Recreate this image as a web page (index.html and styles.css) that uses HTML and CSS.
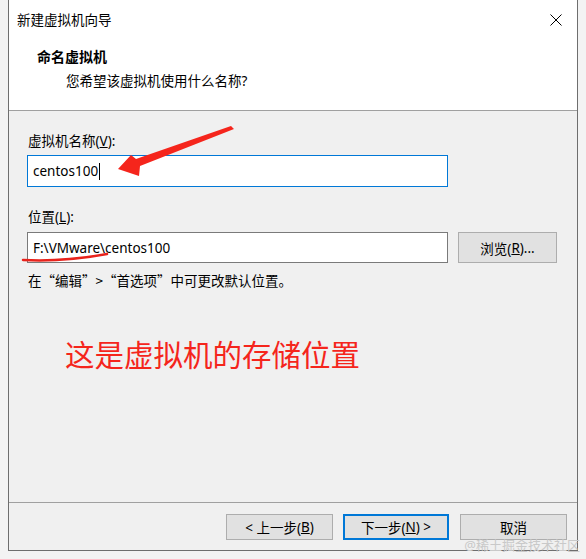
FILE: index.html
```html
<!DOCTYPE html>
<html lang="zh-CN">
<head>
<meta charset="utf-8">
<title>新建虚拟机向导</title>
<link rel="stylesheet" href="styles.css">
</head>
<body>
<div class="window">
  <div class="header">
    <div class="titlebar">
      <span class="title">新建虚拟机向导</span>
      <svg class="close" width="12" height="12" viewBox="0 0 12 12"><path d="M0.5 0.5L11.5 11.5M11.5 0.5L0.5 11.5" stroke="#000" stroke-width="1" fill="none"/></svg>
    </div>
    <div class="heading">命名虚拟机</div>
    <div class="subheading">您希望该虚拟机使用什么名称?</div>
  </div>
  <div class="body">
    <div class="label">虚拟机名称(<u>V</u>):</div>
    <div class="input focused"><span class="value">centos100</span><span class="caret"></span></div>
    <div class="label label-loc">位置(<u>L</u>):</div>
    <div class="row">
      <div class="input loc"><span class="value">F:\VMware\centos100</span></div>
      <div class="btn browse">浏览(<u>R</u>)...</div>
    </div>
    <div class="hint">在“编辑”&gt;“首选项”中可更改默认位置。</div>
    <div class="note">这是虚拟机的存储位置</div>
  </div>
  <div class="footer">
    <div class="btn">&lt; 上一步(<u>B</u>)</div>
    <div class="btn primary">下一步(<u>N</u>) &gt;</div>
    <div class="btn">取消</div>
  </div>
</div>
<svg class="annot" width="586" height="559" viewBox="0 0 586 559">
  <polygon points="118,169 131,155 136,159 231,126 234,129 140,166 139,176" fill="#f5251c"/>
  <path d="M23 260 Q64 262 107 254" stroke="#e8231c" stroke-width="2.5" fill="none" stroke-linecap="round"/>
</svg>
<div class="watermark">@稀土掘金技术社区</div>
</body>
</html>
```

FILE: styles.css
```css
html, body {
  margin: 0;
  padding: 0;
}
body {
  width: 586px;
  height: 559px;
  background: #f3f3f3;
  font-family: "Noto Sans", "Noto Sans CJK SC", sans-serif;
  font-size: 13.5px;
  color: #000;
  position: relative;
  overflow: hidden;
}
.window {
  margin-left: 8px;
  width: 568px;
  height: 550px;
  border: 1px solid #6e6e6e;
  border-top: none;
  background: #f0f0f0;
  display: flex;
  flex-direction: column;
}
.header {
  background: #fff;
  border-bottom: 1px solid #a0a0a0;
  box-sizing: border-box;
  height: 111px;
  flex: none;
}
.titlebar {
  height: 40px;
  display: flex;
  align-items: center;
  justify-content: space-between;
  padding-left: 8px;
  padding-right: 15px;
}
.title {
  line-height: 16px;
}
.close {
  display: block;
}
.heading {
  font-weight: bold;
  font-size: 14px;
  line-height: 18px;
  margin-top: 8px;
  padding-left: 28px;
}
.subheading {
  line-height: 18px;
  margin-top: 6px;
  padding-left: 57px;
}
.body {
  flex: 1;
  padding: 22px 0 0 18px;
  display: flex;
  flex-direction: column;
}
.label {
  line-height: 16px;
  padding-left: 1px;
}
.label-loc {
  margin-top: 22px;
}
.input {
  width: 421px;
  box-sizing: border-box;
  height: 32px;
  margin-top: 6px;
  border: 1px solid #7a7a7a;
  background: #fff;
  display: flex;
  align-items: center;
  padding-left: 5px;
}
.input.focused {
  border-color: #0078d7;
}
.caret {
  display: inline-block;
  width: 1px;
  height: 17px;
  background: #000;
  margin-left: 1px;
}
.row {
  display: flex;
  align-items: flex-start;
  gap: 10px;
  margin-top: 7px;
}
.input.loc {
  margin-top: 0;
  height: 31px;
}
.btn {
  box-sizing: border-box;
  height: 26px;
  width: 107px;
  border: 1px solid #adadad;
  background: #e1e1e1;
  display: flex;
  align-items: center;
  justify-content: center;
}
.browse {
  width: 99px;
  height: 31px;
}
.btn.primary {
  border: 2px solid #0078d7;
  width: 106px;
}
.hint {
  margin-top: 9px;
  line-height: 16px;
  padding-left: 1px;
  font-family: "Noto Sans CJK SC", sans-serif;
}
.note {
  margin-top: 49px;
  padding-left: 38px;
  font-size: 29.5px;
  line-height: 36px;
  color: #f5251c;
}
.footer {
  box-sizing: border-box;
  height: 48px;
  flex: none;
  border-top: 1px solid #a0a0a0;
  display: flex;
  justify-content: flex-end;
  align-items: flex-start;
  padding: 11px 10px 0 0;
  gap: 10px;
}
.footer .btn:last-child {
  margin-left: 1px;
}
.annot {
  position: absolute;
  left: 0;
  top: 0;
  pointer-events: none;
}
.watermark {
  position: absolute;
  right: 6px;
  bottom: 6px;
  font-size: 13px;
  color: #c9c9c9;
  line-height: 16px;
}
```
